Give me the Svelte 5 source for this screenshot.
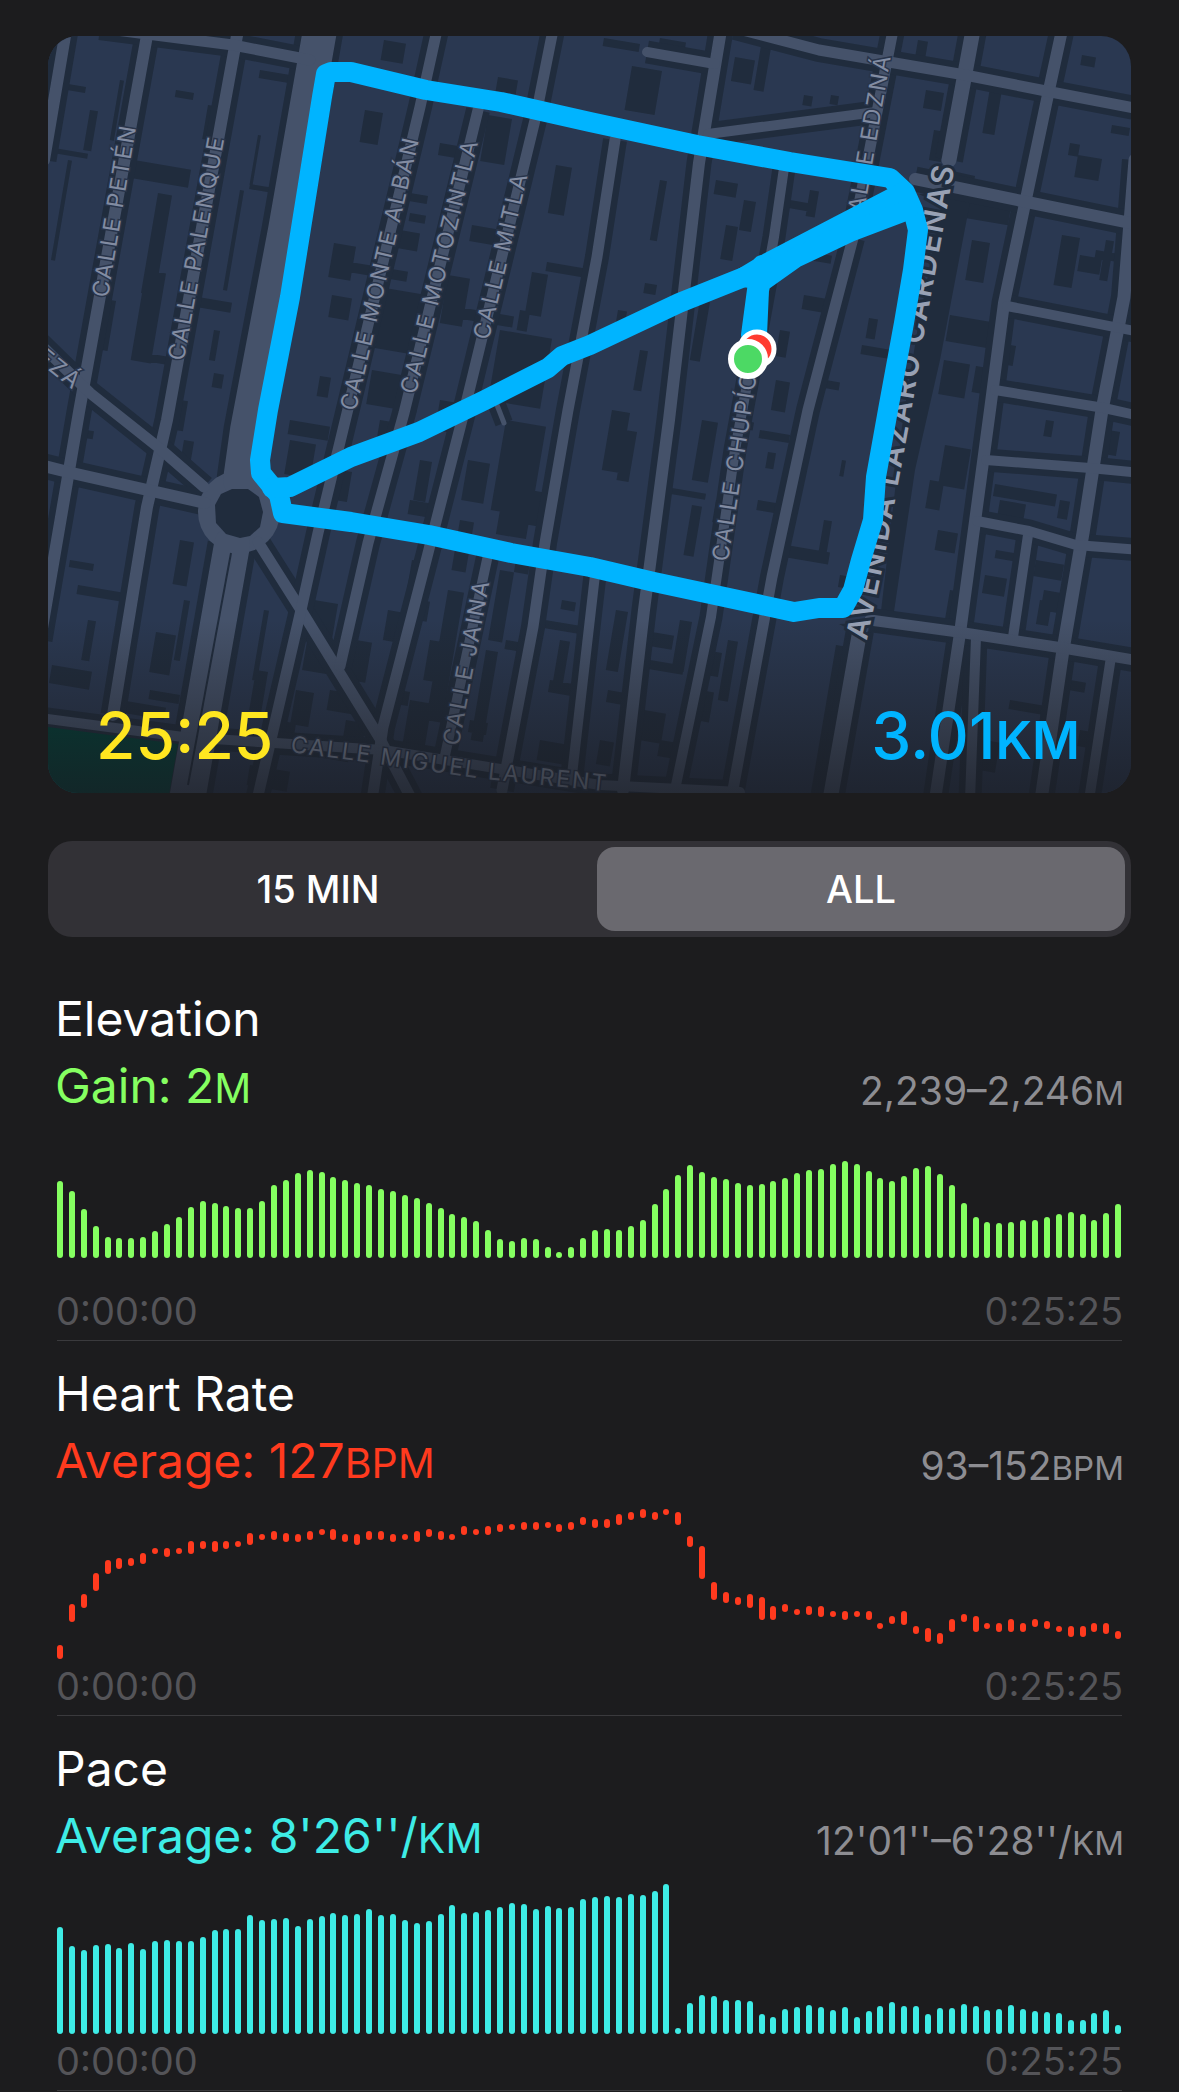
<script>
  let range = $state("ALL");
  const ranges = ["15 MIN", "ALL"];

  const elevation = [
    77, 67, 49, 32, 21, 20, 20, 21, 27, 34, 41, 51, 57, 55, 52, 50, 50, 57, 73, 78,
    85, 88, 86, 81, 78, 75, 73, 69, 67, 63, 60, 55, 50, 44, 41, 37, 28, 19, 17, 20,
    19, 11, 6, 11, 20, 28, 29, 28, 32, 38, 54, 69, 83, 93, 86, 81, 79, 75, 73, 74,
    77, 80, 85, 88, 89, 94, 97, 94, 87, 80, 77, 82, 90, 92, 84, 73, 55, 41, 36, 35,
    36, 38, 38, 41, 44, 46, 44, 38, 45, 54,
  ];

  /* lowest and highest reading of each slice */
  const heart = [
    [0, 14], [37, 55], [51, 65], [68, 86], [85, 99], [90, 101], [93, 101], [95, 106], [105, 111], [102, 111],
    [105, 111], [105, 118], [110, 118], [107, 118], [110, 118], [112, 118], [114, 126], [119, 125], [119, 128], [117, 126],
    [117, 125], [119, 128], [124, 130], [119, 130], [117, 125], [114, 125], [119, 128], [119, 128], [117, 125], [119, 125],
    [117, 128], [122, 130], [119, 128], [119, 125], [124, 133], [124, 130], [124, 133], [127, 135], [129, 135], [129, 137],
    [129, 137], [131, 137], [127, 135], [129, 137], [134, 142], [131, 140], [131, 140], [134, 145], [139, 147], [141, 150],
    [139, 147], [144, 150], [134, 147], [112, 123], [80, 113], [59, 77], [56, 67], [54, 62], [51, 65], [39, 62],
    [39, 53], [47, 55], [44, 50], [44, 53], [42, 53], [42, 48], [39, 48], [42, 48], [39, 48], [30, 36],
    [35, 43], [34, 48], [25, 33], [17, 31], [15, 26], [27, 40], [37, 45], [27, 43], [30, 36], [27, 36],
    [27, 40], [27, 36], [32, 40], [30, 38], [27, 33], [22, 33], [22, 33], [27, 36], [25, 36], [20, 28],
  ];

  const pace = [
    107, 88, 84, 89, 90, 86, 91, 85, 93, 94, 93, 93, 97, 104, 105, 105, 119, 114, 115, 116,
    108, 115, 118, 121, 119, 120, 125, 119, 120, 114, 111, 113, 120, 129, 121, 122, 124, 127, 131, 130,
    125, 128, 126, 127, 135, 137, 138, 137, 140, 139, 143, 150, 6, 31, 39, 38, 34, 34, 33, 20,
    17, 25, 27, 29, 27, 24, 27, 17, 23, 28, 32, 28, 28, 20, 26, 26, 30, 28, 24, 25,
    29, 25, 23, 22, 21, 14, 14, 21, 24, 9,
  ];

  const metrics = [
    { name: "Elevation", tone: "green", label: "Gain: 2", unit: "M", span: "2,239–2,246", bars: elevation.map((h) => [26, 26 + h]) },
    { name: "Heart Rate", tone: "red", label: "Average: 127", unit: "BPM", span: "93–152", bars: heart },
    { name: "Pace", tone: "cyan", label: "Average: 8'26''/", unit: "KM", span: "12'01''–6'28''/", bars: pace.map((h) => [0, h]) },
  ];

  const roads = [
    { w: 12, d: "M66 30L44 160" },
    { w: 12, d: "M148 30L79 412L40 640" },
    { w: 12, d: "M238 30L167 420L147 507L113 715" },
    { w: 34, d: "M320 30L285 230L247 430L240 480" },
    { w: 36, d: "M232 545L187 800" },
    { w: 11, d: "M40 344L90 393L158 447L204 487" },
    { w: 12, d: "M40 465L72 473L205 503" },
    { w: 11, d: "M258 542L301 610L379 737L412 800" },
    { w: 11, d: "M100 28L233 45L310 60" },
    { w: 11, d: "M437 30L420 107L347 413L318 533L301 610L257 800" },
    { w: 11, d: "M478 110L404 413L368 543L340 666" },
    { w: 11, d: "M553 30L535 120L462 420L427 557L383 727L372 800" },
    { w: 11, d: "M615 140L597 257L568 410L545 543L533 627L502 790" },
    { w: 10, d: "M488 555L444 760" },
    { w: 12, d: "M721 30L699 163L669 420L644 610L623 790" },
    { w: 10, d: "M595 575L572 775" },
    { w: 10, d: "M784 168L774 237L735 450L711 617L676 785" },
    { w: 11, d: "M853 238L808 410L772 577L732 795" },
    { w: 11, d: "M893 30L854 230" },
    { w: 15, d: "M973 30L949 160" },
    { w: 15, d: "M860 630L830 800" },
    { w: 12, d: "M1062 30L1049 90L1004 303L990 410L960 633L935 800" },
    { w: 13, d: "M1135 160L1124 297L1102 410L1083 533L1063 650L1041 800" },
    { w: 10, d: "M1028 535L1013 637" },
    { w: 10, d: "M976 637L970 800" },
    { w: 10, d: "M1111 657L1089 800" },
    { w: 11, d: "M735 28L819 50L965 75L1051 92L1140 109" },
    { w: 12, d: "M915 179L1022 201L1140 225" },
    { w: 10, d: "M1007 306L1140 332" },
    { w: 10, d: "M995 390L1104 408L1140 416" },
    { w: 10, d: "M986 460L1090 468L1140 473" },
    { w: 10, d: "M977 521L1029 531L1076 545L1140 550" },
    { w: 11, d: "M870 620L958 632L1069 649L1140 661" },
    { w: 10, d: "M647 52L715 64" },
    { w: 10, d: "M708 134L876 112" },
    { w: 10, d: "M40 718L183 737L383 750L600 785L740 792" },
    { w: 5, d: "M497 405L504 423" },
  ];

  /* courtyards: x, y, width, height; drawn leaning like the street grid */
  const yards = [
    [158, 193, 14, 100], [146, 270, 20, 90], [134, 160, 57, 18], [365, 110, 18, 32], [334, 243, 22, 34],
    [350, 262, 58, 10], [332, 295, 20, 22], [385, 288, 50, 60], [372, 370, 50, 34], [400, 230, 20, 18],
    [440, 143, 28, 12], [488, 115, 24, 46], [472, 225, 32, 16], [556, 165, 16, 48], [547, 262, 44, 9],
    [532, 272, 16, 42], [452, 306, 62, 11], [448, 275, 22, 48], [176, 90, 18, 7], [208, 105, 8, 34],
    [198, 297, 34, 10], [498, 77, 20, 14], [384, 40, 22, 20], [410, 193, 18, 8], [410, 213, 16, 8],
    [214, 373, 10, 14], [320, 376, 11, 20], [140, 352, 34, 8], [56, 82, 30, 6], [54, 148, 34, 5],
    [240, 190, 4, 100], [250, 184, 24, 5], [258, 135, 3, 50], [68, 160, 4, 100], [260, 70, 30, 8],
    [632, 66, 30, 44], [604, 38, 36, 8], [660, 38, 26, 20], [735, 57, 20, 24], [762, 40, 10, 50],
    [804, 95, 9, 10], [831, 95, 8, 9], [918, 40, 10, 22], [990, 88, 12, 45], [1070, 143, 10, 12],
    [1078, 155, 24, 22], [1112, 125, 18, 8], [1082, 55, 14, 10], [810, 190, 9, 26], [726, 225, 12, 34],
    [804, 295, 26, 14], [869, 318, 9, 20], [862, 345, 34, 9], [972, 240, 18, 40], [1062, 235, 18, 50],
    [950, 315, 44, 26], [944, 360, 26, 34], [976, 366, 22, 26], [1080, 255, 22, 16], [1106, 240, 8, 40],
    [926, 90, 18, 18], [934, 130, 12, 30], [946, 190, 66, 24], [645, 283, 12, 10], [618, 310, 9, 30],
    [612, 410, 18, 60], [702, 420, 16, 60], [666, 487, 40, 6], [692, 505, 10, 50], [768, 452, 8, 16],
    [824, 520, 8, 36], [842, 460, 4, 16], [945, 445, 26, 40], [938, 530, 20, 20], [995, 484, 62, 12],
    [1000, 500, 26, 20], [985, 575, 22, 18], [1036, 560, 28, 16], [1044, 590, 20, 20], [1046, 420, 8, 16],
    [836, 645, 22, 150], [625, 430, 12, 50], [740, 420, 14, 8], [758, 500, 24, 10], [716, 500, 10, 22],
    [180, 540, 14, 44], [78, 585, 44, 9], [156, 632, 20, 40], [52, 665, 40, 18], [256, 670, 12, 40],
    [314, 600, 24, 70], [296, 690, 18, 34], [412, 560, 14, 26], [388, 610, 14, 30], [448, 590, 16, 130],
    [500, 570, 14, 70], [486, 650, 12, 90], [468, 460, 22, 40], [512, 430, 26, 60], [500, 510, 30, 24],
    [420, 460, 12, 40], [545, 620, 36, 8], [550, 680, 26, 12], [616, 610, 12, 60], [608, 690, 20, 12],
    [650, 660, 34, 9], [644, 710, 22, 30], [704, 650, 18, 24], [700, 690, 14, 30], [120, 700, 46, 12],
    [356, 640, 16, 40], [290, 440, 26, 34], [340, 470, 12, 30], [1010, 700, 34, 9], [1070, 680, 16, 10],
    [1080, 730, 20, 16], [984, 740, 16, 30], [86, 430, 8, 8], [184, 440, 10, 30], [562, 600, 14, 9],
    [410, 700, 22, 60], [470, 720, 18, 12], [530, 490, 14, 34],
    [500, 330, 52, 70], [520, 310, 10, 20], [440, 400, 24, 30], [290, 420, 40, 14], [380, 420, 12, 24],
    [410, 500, 30, 14], [460, 520, 14, 50], [506, 420, 40, 90], [516, 560, 14, 12], [506, 640, 26, 9],
    [560, 640, 10, 50], [540, 740, 26, 20], [600, 740, 14, 24], [640, 630, 34, 14], [680, 620, 12, 50],
    [660, 740, 30, 16], [720, 590, 26, 12], [728, 640, 10, 60], [640, 350, 8, 40], [700, 300, 10, 60],
    [716, 180, 22, 14], [744, 200, 12, 30], [660, 180, 7, 60], [790, 200, 20, 8], [798, 250, 34, 8],
    [776, 380, 14, 30], [760, 430, 30, 8], [724, 460, 8, 26], [780, 330, 10, 26], [826, 380, 14, 8],
    [786, 545, 44, 12], [840, 575, 24, 12], [930, 480, 14, 28], [950, 590, 10, 30], [1010, 345, 6, 20],
    [1108, 430, 12, 24], [1040, 600, 12, 24], [996, 550, 24, 8], [1060, 500, 10, 18], [1096, 250, 20, 8],
    [90, 110, 8, 40], [120, 80, 4, 60], [260, 300, 4, 60], [180, 400, 8, 30], [110, 300, 6, 50],
    [70, 560, 24, 7], [88, 620, 8, 40], [128, 560, 6, 50], [184, 600, 6, 60], [150, 690, 30, 9],
    [264, 610, 5, 70], [276, 720, 20, 30], [330, 690, 34, 20], [346, 720, 20, 16], [214, 330, 6, 30],
    [290, 740, 60, 12], [250, 765, 40, 20], [430, 640, 12, 40], [398, 690, 12, 14], [420, 600, 10, 20],
  ];

  const lean = 0.17;
  const yardPath = yards
    .map(([x, y, w, h]) => `M${x} ${y}l${w} ${w * lean}l${-h * lean} ${h}l${-w} ${-w * lean}z`)
    .join("");

  const streets = [
    { id: "peten", name: "CALLE PETÉN", d: "M100 297L134 90" },
    { id: "palenque", name: "CALLE PALENQUE", d: "M176 360L225 90" },
    { id: "monte", name: "CALLE MONTE ALBÁN", d: "M348 410L423 87" },
    { id: "motozintla", name: "CALLE MOTOZINTLA", d: "M408 393L484 85" },
    { id: "mitla", name: "CALLE MITLA", d: "M481 339L532 122" },
    { id: "jaina", name: "CALLE JAINA", d: "M451 745L493 520" },
    { id: "laurent", name: "CALLE MIGUEL LAURENT", d: "M291 744L372 755L476 770L660 789" },
    { id: "edzna", name: "CALLE EDZNÁ", d: "M853 230L889 20" },
    { id: "chupic", name: "CALLE CHUPÍC", d: "M720 561L754 340" },
    { id: "eza", name: "EZÁ", d: "M40 353L94 397" },
  ];
</script>

<main>
  <section class="map" aria-label="Route map">
    <svg viewBox="48 36 1083 757" aria-hidden="true">
      <defs>
        <linearGradient id="shade" x1="0" y1="0" x2="0" y2="1">
          <stop offset="0" stop-color="#1c1c1e" stop-opacity="0" />
          <stop offset="1" stop-color="#1a1c22" stop-opacity="0.7" />
        </linearGradient>
      </defs>
      <rect class="land" x="48" y="36" width="1083" height="757" />
      <path class="yard" d={yardPath} />
      <path class="yard" d="M880 620L904 413L917 333L948 170L975 176L940 360L915 470L892 625z" />
      {#each roads as road}
        <path class="casing" d={road.d} stroke-width={road.w + 13} />
      {/each}
      <path class="park" d="M40 726L178 744L168 800L40 800z" />
      <circle class="plaza" cx="239" cy="512" r="41" />
      {#each roads as road}
        <path class="road" d={road.d} stroke-width={road.w} />
      {/each}
      <path class="median" d="M231 553L188 785" />
      <path class="yard" d="M232 489L248 489L259 497L263 512L260 527L250 536L240 538L226 534L216 523L215 505L221 494z" />

      {#each streets as street}
        <path id={street.id} d={street.d} fill="none" />
        <text class="street" dy="8"><textPath href="#{street.id}">{street.name}</textPath></text>
      {/each}
      <path id="avenue" d="M857 639L874 560L901 413L914 333L956 105" fill="none" />
      <text class="street avenue" dy="10"><textPath href="#avenue">AVENIDA LÁZARO CÁRDENAS</textPath></text>

      <rect x="48" y="620" width="1083" height="173" fill="url(#shade)" />

      <path class="route" d="M326 74L331 72L351 72L426 90L501 102L590 122L697 145L790 162L890 178L905 192L913 210L918 230L913 270L904 323L888 410L876 477L873 520L861 560L853 590L843 608L819 608L794 612L715 595L654 582L590 567L511 553L429 535L351 522L283 513L279 495L261 473L260 460L268 410L290 297L322 97z" />
      <path class="route" d="M272 488L290 487L351 457L419 432L485 400L548 368L562 356L590 345L679 303L744 277L769 262L840 225L904 192" />
      <path class="route" d="M744 277L764 280L795 258L850 232L908 210M762 265L757 290L751 335M764 265L759 290L757 335" />
      <circle cx="757" cy="349" r="17" fill="#ff3b30" stroke="#fff" stroke-width="5" />
      <circle cx="748" cy="359" r="17" fill="#4cd964" stroke="#fff" stroke-width="6" />
    </svg>
    <div class="totals">
      <span class="time">25:25</span>
      <span class="distance">3.01<span class="unit">KM</span></span>
    </div>
  </section>

  <div class="segmented">
    {#each ranges as r}
      <button class:selected={range === r} aria-pressed={range === r} onclick={() => (range = r)}>{r}</button>
    {/each}
  </div>

  {#each metrics as metric}
    <section class="metric {metric.tone}">
      <h2>{metric.name}</h2>
      <div class="summary">
        <span class="value">{metric.label}<span class="unit">{metric.unit}</span></span>
        <span class="span">{metric.span}<span class="unit">{metric.unit}</span></span>
      </div>
      <div class="chart">
        {#each metric.bars as [low, high]}
          <div class="bar" style="height: {high - low}px; margin-bottom: {low}px"></div>
        {/each}
      </div>
      <div class="times">
        <span>0:00:00</span>
        <span>0:25:25</span>
      </div>
      <hr />
    </section>
  {/each}
</main>

<style>
  :global(body) {
    background: #1c1c1e;
    font-family: Inter, "Liberation Sans", sans-serif;
    color: #fff;
  }

  main {
    padding-top: 36px;
  }

  .map {
    position: relative;
    margin: 0 48px;
    border-radius: 30px;
    overflow: hidden;
  }

  .map svg {
    display: block;
    width: 100%;
  }

  .land {
    fill: #2a3851;
  }

  .yard {
    fill: #202c3d;
  }

  .casing {
    fill: none;
    stroke: #202c3d;
  }

  .park {
    fill: #004038;
  }

  .plaza {
    fill: #45526a;
  }

  .road {
    fill: none;
    stroke: #45526a;
    stroke-linecap: round;
    stroke-linejoin: round;
  }

  .median {
    fill: none;
    stroke: #202c3d;
    stroke-width: 2;
  }

  .street {
    font-size: 23px;
    letter-spacing: 2px;
    fill: #828ca2;
    stroke: #28344a;
    stroke-width: 3;
    paint-order: stroke;
  }

  .avenue {
    font-size: 30px;
    font-weight: 600;
    fill: #98a1b4;
    stroke: #202c3d;
    stroke-width: 6;
  }

  .route {
    fill: none;
    stroke: #00b4ff;
    stroke-width: 20;
    stroke-linejoin: round;
    stroke-linecap: round;
  }

  .unit {
    line-height: 1;
  }

  .totals {
    position: absolute;
    left: 48px;
    right: 51px;
    bottom: 17px;
    display: flex;
    justify-content: space-between;
    font-size: 64px;
    line-height: 80px;
    font-weight: 500;
  }

  .time {
    color: #ffe620;
  }

  .distance {
    color: #00b4ff;
  }

  .distance .unit {
    font-size: 52px;
    font-weight: 600;
  }

  .segmented {
    display: flex;
    gap: 15px;
    margin: 48px 48px 29px;
    padding: 6px;
    border-radius: 24px;
    background: #323136;
  }

  .segmented button {
    flex: 1;
    height: 84px;
    border: 0;
    border-radius: 18px;
    background: none;
    color: #fff;
    font: 500 38px Inter, "Liberation Sans", sans-serif;
  }

  .segmented button.selected {
    background: #6a696f;
  }

  .metric {
    padding: 19px 55px 0;
  }

  .green {
    --tone: #85ff61;
  }

  .red {
    --tone: #ff3a1e;
  }

  .cyan {
    --tone: #3eece6;
  }

  h2 {
    margin: 0;
    font-size: 48px;
    line-height: 67px;
    font-weight: 400;
  }

  .summary {
    display: flex;
    justify-content: space-between;
    align-items: flex-end;
  }

  .value {
    font-size: 48px;
    line-height: 67px;
    color: var(--tone);
  }

  .value .unit {
    font-size: 41px;
  }

  .span {
    font-size: 39px;
    line-height: 57px;
    color: #8d8d92;
  }

  .span .unit {
    font-size: 33px;
  }

  .chart {
    display: flex;
    justify-content: space-between;
    align-items: flex-end;
    height: 150px;
    margin: 15px 2px 4px;
  }

  .bar {
    width: 6px;
    border-radius: 3px;
    background: var(--tone);
  }

  .times {
    display: flex;
    justify-content: space-between;
    margin: 0 1px;
    font-size: 38px;
    line-height: 46px;
    color: #545458;
  }

  hr {
    height: 1px;
    margin: 6px 2px 0;
    border: 0;
    background: #3a3a3d;
  }
</style>
